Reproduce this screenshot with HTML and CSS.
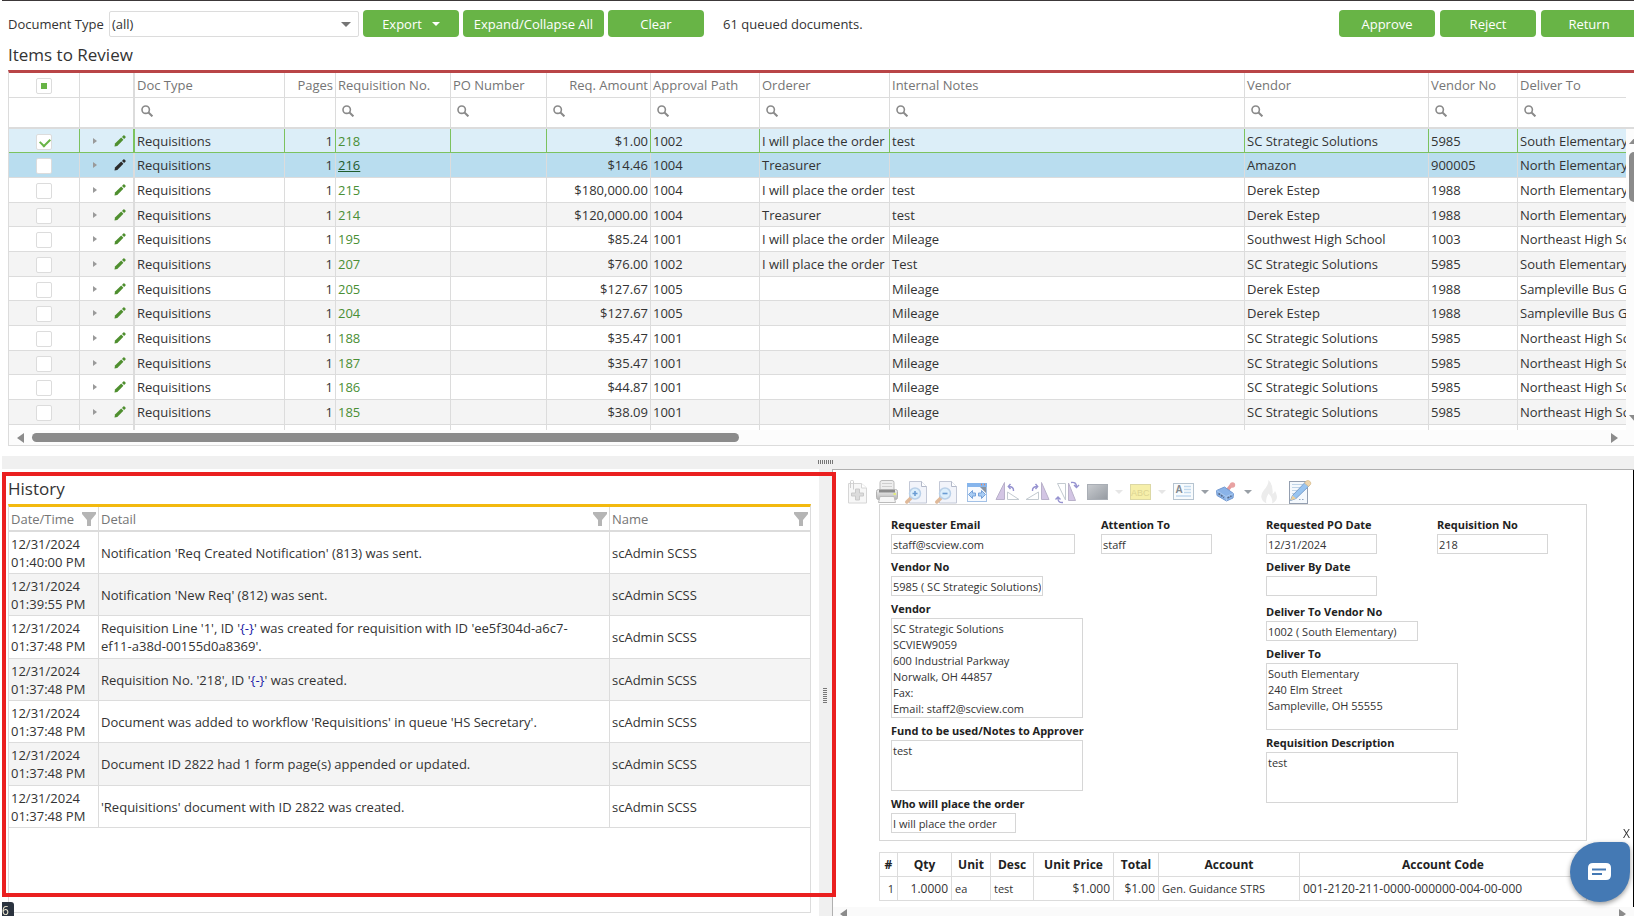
FILE: index.html
```html
<!DOCTYPE html>
<html lang="en">

<head>
    <meta charset="UTF-8">
    <meta name="viewport" content="width=device-width, initial-scale=1.0">
    <title>Items to Review</title>
    <link rel="stylesheet" href="styles.css">
</head>

<body>
    <!-- shared icons -->
    <svg class="symbols" aria-hidden="true">
        <symbol id="icon-search" viewBox="0 0 12 12">
            <circle cx="4.7" cy="4.7" r="3.7" fill="none" stroke="#8a8a8a" stroke-width="1.6"/>
            <path d="M7.5 7.5L11.4 11.4" stroke="#8a8a8a" stroke-width="2"/>
        </symbol>
        <symbol id="icon-pencil" viewBox="0 0 12 12">
            <path d="M0.5 11.5L1 8.6L7.2 2.6L9.4 4.8L3.3 10.9Z" fill="currentColor"/>
            <path d="M8 1.9L9.3 0.6Q10 0 10.8 0.8L11.3 1.3Q12 2 11.4 2.7L10.1 4Z" fill="currentColor"/>
        </symbol>
        <symbol id="icon-filter" viewBox="0 0 14 14">
            <path d="M0 0H14V2L9 8V14H5V8L0 2Z" fill="#b5b5b5"/>
        </symbol>
    </svg>

    <section class="review">
        <div class="toolbar">
            <label for="docType">Document Type</label>
            <div class="select-box">
                <select id="docType">
                    <option>(all)</option>
                </select>
            </div>
            <button class="button">Export <span class="caret"></span></button>
            <button class="button button-wide">Expand/Collapse All</button>
            <button class="button">Clear</button>
            <span class="queued">61 queued documents.</span>
            <div class="actions">
                <button class="button">Approve</button>
                <button class="button">Reject</button>
                <button class="button">Return</button>
            </div>
        </div>

        <h1 class="title">Items to Review</h1>

        <div class="grid">
            <div class="grid-main">
                <div class="grid-view">
                    <table class="items">
                        <colgroup>
                            <col class="c-check"><col class="c-edit"><col class="c-type"><col class="c-pages">
                            <col class="c-req"><col class="c-po"><col class="c-amount"><col class="c-path">
                            <col class="c-orderer"><col class="c-notes"><col class="c-vendor"><col class="c-vno">
                            <col class="c-deliver">
                        </colgroup>
                        <thead>
                            <tr class="names">
                                <th class="center"><input type="checkbox" class="check" id="checkAll" aria-label="Select all"></th>
                                <th></th>
                                <th>Doc Type</th>
                                <th class="right">Pages</th>
                                <th>Requisition No.</th>
                                <th>PO Number</th>
                                <th class="right">Req. Amount</th>
                                <th>Approval Path</th>
                                <th>Orderer</th>
                                <th>Internal Notes</th>
                                <th>Vendor</th>
                                <th>Vendor No</th>
                                <th>Deliver To</th>
                            </tr>
                            <tr class="filters" id="filters"></tr>
                        </thead>
                        <tbody id="rows"></tbody>
                    </table>
                </div>
                <div class="vscroll">
                    <div class="vscroll-head"></div>
                    <div class="vscroll-track">
                        <span class="arrow arrow-up"></span>
                        <span class="vthumb"></span>
                        <span class="arrow arrow-down"></span>
                    </div>
                </div>
            </div>
            <div class="hscroll">
                <span class="arrow arrow-left"></span>
                <div class="hscroll-track"><span class="hthumb"></span></div>
                <span class="arrow arrow-right"></span>
            </div>
        </div>
    </section>

    <div class="splitter"><span class="grip"></span></div>

    <div class="lower">
        <section class="history">
            <h2 class="title">History</h2>
            <div class="history-grid">
                <table class="log">
                    <colgroup>
                        <col class="c-date"><col class="c-detail"><col class="c-name">
                    </colgroup>
                    <thead>
                        <tr>
                            <th><div class="th-filter">Date/Time <svg class="funnel"><use href="#icon-filter"/></svg></div></th>
                            <th><div class="th-filter">Detail <svg class="funnel"><use href="#icon-filter"/></svg></div></th>
                            <th><div class="th-filter">Name <svg class="funnel"><use href="#icon-filter"/></svg></div></th>
                        </tr>
                    </thead>
                    <tbody>
                        <tr>
                            <td>12/31/2024<br>01:40:00 PM</td>
                            <td>Notification 'Req Created Notification' (813) was sent.</td>
                            <td>scAdmin SCSS</td>
                        </tr>
                        <tr>
                            <td>12/31/2024<br>01:39:55 PM</td>
                            <td>Notification 'New Req' (812) was sent.</td>
                            <td>scAdmin SCSS</td>
                        </tr>
                        <tr>
                            <td>12/31/2024<br>01:37:48 PM</td>
                            <td>Requisition Line '1', ID '<a href="#">{-}</a>' was created for requisition with ID 'ee5f304d-a6c7-<br>ef11-a38d-00155d0a8369'.</td>
                            <td>scAdmin SCSS</td>
                        </tr>
                        <tr>
                            <td>12/31/2024<br>01:37:48 PM</td>
                            <td>Requisition No. '218', ID '<a href="#">{-}</a>' was created.</td>
                            <td>scAdmin SCSS</td>
                        </tr>
                        <tr>
                            <td>12/31/2024<br>01:37:48 PM</td>
                            <td>Document was added to workflow 'Requisitions' in queue 'HS Secretary'.</td>
                            <td>scAdmin SCSS</td>
                        </tr>
                        <tr>
                            <td>12/31/2024<br>01:37:48 PM</td>
                            <td>Document ID 2822 had 1 form page(s) appended or updated.</td>
                            <td>scAdmin SCSS</td>
                        </tr>
                        <tr>
                            <td>12/31/2024<br>01:37:48 PM</td>
                            <td>'Requisitions' document with ID 2822 was created.</td>
                            <td>scAdmin SCSS</td>
                        </tr>
                    </tbody>
                </table>
            </div>
        </section>

        <div class="splitter splitter-v"><span class="grip grip-v"></span></div>

        <section class="viewer">
            <div class="viewer-tools">
                <button class="tool" aria-label="Add page">
                    <svg viewBox="0 0 24 24"><path d="M2.5 3.5H15.5L20.5 8V23H2.5Z" fill="#f7f7f7" stroke="#d6d6d6"/><path d="M15.5 3.5V8H20.5" fill="#fff" stroke="#d6d6d6"/><path d="M9.5 9V13H5.5V16H9.5V20H13.5V16H17.5V13H13.5V9Z" fill="#dcdcdc" stroke="#cacaca"/><path d="M4.5 8V1.5Q4.5 0.5 5.5 0.5H6.5Q7.5 0.5 7.5 1.5V9.5" fill="none" stroke="#cfcfcf"/></svg>
                </button>
                <button class="tool" aria-label="Print">
                    <svg viewBox="0 0 24 24"><defs><linearGradient id="pr" x1="0" y1="0" x2="0" y2="1"><stop offset="0" stop-color="#f2f2f2"/><stop offset="1" stop-color="#b4b4b4"/></linearGradient></defs><rect x="4" y="0.5" width="14" height="11" rx="2" fill="#eee" stroke="#bbb"/><path d="M6 3.5H16M6 6.5H16" stroke="#cfcfcf"/><rect x="0.5" y="9.5" width="21" height="10" rx="2" fill="url(#pr)" stroke="#b3b3b3"/><rect x="3" y="10" width="16" height="2.5" fill="#8b8b8b"/><rect x="17.5" y="13" width="2.5" height="2" fill="#e3ec7e"/><path d="M4 16.5H18L19.5 22.5H2.5Z" fill="#f6f6f6" stroke="#bbb"/></svg>
                </button>
                <button class="tool" aria-label="Zoom in">
                    <svg viewBox="0 0 24 24"><path d="M3.5 1.5H15.5L20.5 6.5V23H3.5Z" fill="#f2f4fa" stroke="#c3c8d6"/><path d="M15.5 1.5V6.5H20.5" fill="#fff" stroke="#b3b9c9"/><path d="M5.5 17.5L0.8 22" stroke="#dfb999" stroke-width="3.5" stroke-linecap="round"/><circle cx="9" cy="13.5" r="5.5" fill="#dceefb" stroke="#b9d0e8" stroke-width="1.5"/><path d="M6.5 13.5H11.5M9 11V16" stroke="#6a9cd3" stroke-width="1.6"/></svg>
                </button>
                <button class="tool" aria-label="Zoom out">
                    <svg viewBox="0 0 24 24"><path d="M3.5 1.5H15.5L20.5 6.5V23H3.5Z" fill="#f2f4fa" stroke="#c3c8d6"/><path d="M15.5 1.5V6.5H20.5" fill="#fff" stroke="#b3b9c9"/><path d="M5.5 17.5L0.8 22" stroke="#dfb999" stroke-width="3.5" stroke-linecap="round"/><circle cx="9" cy="13.5" r="5.5" fill="#dceefb" stroke="#b9d0e8" stroke-width="1.5"/><path d="M6.5 13.5H11.5" stroke="#6a9cd3" stroke-width="1.6"/></svg>
                </button>
                <button class="tool" aria-label="Fit width">
                    <svg viewBox="0 0 24 24"><rect x="1.5" y="3.5" width="19" height="18" fill="#f7fafe" stroke="#a3c1e6"/><rect x="1" y="3" width="20" height="4" fill="#86b5ec"/><path d="M15 4.5H16M18 4.5H19" stroke="#e8865e" stroke-width="1.5"/><path d="M14 7H20V13Z" fill="#8a93a0"/><path d="M2.5 14.5L6.5 10.5V13H9.500V16H6.500V18.500ZM19.500 14.500L15.500 10.500V13H12.500V16H15.500V18.500Z" fill="#a9cdf4" stroke="#76a2d9"/></svg>
                </button>
                <button class="tool" aria-label="Rotate left">
                    <svg viewBox="0 0 24 24"><path d="M8.5 2.5V19.5H0Z" fill="#d3c5e4" stroke="#b9b1ca"/><path d="M11.5 12V19.5H23Z" fill="#fff" stroke="#c3cad0"/><path d="M17.5 11Q18 6.500 12.5 6.500M14.500 4L12.300 6.500L14.500 9" fill="none" stroke="#9692d0" stroke-width="1.4"/></svg>
                </button>
                <button class="tool" aria-label="Rotate right">
                    <svg viewBox="0 0 24 24"><path d="M15.5 2.5V19.5H23Z" fill="#d3c5e4" stroke="#b9b1ca"/><path d="M12.5 12V19.5H0Z" fill="#fff" stroke="#c3cad0"/><path d="M6.500 11Q6 6.500 11.5 6.500M9.500 4L11.700 6.500L9.500 9" fill="none" stroke="#9692d0" stroke-width="1.4"/></svg>
                </button>
                <button class="tool" aria-label="Flip">
                    <svg viewBox="0 0 24 24"><path d="M1.5 3.5H9.500V20Z" fill="#fff" stroke="#c3cad0"/><path d="M12.5 3V20.5H19.5Z" fill="#d3c5e4" stroke="#b9b1ca"/><path d="M15 2.5Q20.5 1.5 20.5 7M18 5L20.5 7.5L23 5M7 22.5Q1.5 23 2 17.5M-0.5 19.5L2 17L4.5 19.5" fill="none" stroke="#9692d0" stroke-width="1.4"/></svg>
                </button>
                <div class="tool-group">
                    <button class="tool" aria-label="Redact">
                        <svg viewBox="0 0 24 24"><defs><linearGradient id="gr" x1="0" y1="0" x2="1" y2="1"><stop offset="0" stop-color="#c9ccd0"/><stop offset="1" stop-color="#959aa1"/></linearGradient></defs><rect x="1.5" y="4.5" width="20" height="15" fill="url(#gr)" stroke="#a9aeb5"/></svg>
                    </button>
                    <button class="tool-drop faint" aria-label="Redact options"></button>
                </div>
                <div class="tool-group">
                    <button class="tool" aria-label="Highlight">
                        <svg viewBox="0 0 24 24"><rect x="1.5" y="4.5" width="20" height="15" fill="#f6efaa" stroke="#dcd8a5"/><text x="2" y="15.5" class="tool-text" fill="#dcd493">ABC</text></svg>
                    </button>
                    <button class="tool-drop faint" aria-label="Highlight options"></button>
                </div>
                <div class="tool-group">
                    <button class="tool" aria-label="Text note">
                        <svg viewBox="0 0 24 24"><rect x="1.5" y="3.5" width="20" height="16" fill="#f8fbfd" stroke="#b6c4d0"/><text x="3.5" y="13" class="tool-letter" fill="#828990">A</text><path d="M12 6.5H19M12 9.5H19M12 12.5H19M4 16H19" stroke="#c1d9ee" stroke-width="1.3"/></svg>
                    </button>
                    <button class="tool-drop" aria-label="Text note options"></button>
                </div>
                <div class="tool-group">
                    <button class="tool" aria-label="Stamp">
                        <svg viewBox="0 0 24 24"><path d="M12.5 10L16.5 5" stroke="#e59a9a" stroke-width="3.5"/><circle cx="17.5" cy="5" r="2.7" fill="#e8a2a2"/><path d="M1.5 10.5L9.5 7L18.5 13.5L18 18L11.5 21L2 15.5Z" fill="#8ab3e8" stroke="#7399d0"/><path d="M1.5 10.5L11 16.5L18.5 13.5M11 16.5L11.5 21" fill="none" stroke="#abcaf0"/><path d="M3.5 13.5L9 17.5M12.5 18L16.5 16" stroke="#596b88" stroke-width="1.6" stroke-dasharray="2 1"/></svg>
                    </button>
                    <button class="tool-drop" aria-label="Stamp options"></button>
                </div>
                <button class="tool" aria-label="Burn">
                    <svg viewBox="0 0 24 24"><path d="M10.5 0Q10.5 5 6 10Q3 13.5 3.300 17Q4 21.5 8.5 23.5Q7 19 10.5 13.5Q15.5 18.5 14 23.5Q19 21 19 16.5Q18.5 13 17 11Q16.5 13 14.5 14Q15.5 5 10.5 0Z" fill="#ececec"/></svg>
                </button>
                <button class="tool" aria-label="Edit form">
                    <svg viewBox="0 0 24 24"><rect x="1.5" y="1.5" width="18" height="22" fill="#f5f9fd" stroke="#949fb0"/><path d="M4 4.5H15M4 7.5H13M4 10.5H11M4 13.5H9" stroke="#bfd4e8" stroke-width="1.2"/><path d="M11 19.5H12.5M14 19.5H15.5" stroke="#8fa5c2"/><path d="M2.5 20.5L4.5 15.5L17.5 2L21.5 5.5L8 18.5Z" fill="#98c4f0" stroke="#7a9fcc"/><path d="M2.5 20.5L4.5 15.5L8 18.5Z" fill="#ecd09b"/><path d="M16.5 3L18.5 0.8Q20.5 0 22 1.5Q23.5 3 22.5 4.5L20.5 6.5Z" fill="#eed6ae" stroke="#d6b98a" stroke-width="0.7"/></svg>
                </button>
            </div>

            <div class="page">
                <form class="form">
                    <div class="form-left">
                        <div class="pair">
                            <div class="field">
                                <label for="email">Requester Email</label>
                                <input type="text" id="email" class="w-email" value="staff@scview.com">
                            </div>
                            <div class="field">
                                <label for="attention">Attention To</label>
                                <input type="text" id="attention" value="staff">
                            </div>
                        </div>
                        <div class="field">
                            <label for="vendorNo">Vendor No</label>
                            <input type="text" id="vendorNo" class="w-code" value="5985 ( SC Strategic Solutions)">
                        </div>
                        <div class="field">
                            <label for="vendor">Vendor</label>
                            <textarea id="vendor" class="h-tall">SC Strategic Solutions
SCVIEW9059
600 Industrial Parkway
Norwalk, OH 44857
Fax:
Email: staff2@scview.com</textarea>
                        </div>
                        <div class="field">
                            <label for="fund">Fund to be used/Notes to Approver</label>
                            <textarea id="fund">test</textarea>
                        </div>
                        <div class="field">
                            <label for="placer">Who will place the order</label>
                            <input type="text" id="placer" class="w-placer" value="I will place the order">
                        </div>
                    </div>
                    <div class="form-right">
                        <div class="pair">
                            <div class="field">
                                <label for="poDate">Requested PO Date</label>
                                <input type="text" id="poDate" value="12/31/2024">
                            </div>
                            <div class="field">
                                <label for="reqNo">Requisition No</label>
                                <input type="text" id="reqNo" value="218">
                            </div>
                        </div>
                        <div class="field">
                            <label for="byDate">Deliver By Date</label>
                            <input type="text" id="byDate" value="">
                        </div>
                        <div class="field deliver">
                            <label for="deliverNo">Deliver To Vendor No</label>
                            <input type="text" id="deliverNo" class="w-code" value="1002 ( South Elementary)">
                        </div>
                        <div class="field">
                            <label for="deliverTo">Deliver To</label>
                            <textarea id="deliverTo" class="h-mid">South Elementary
240 Elm Street
Sampleville, OH 55555</textarea>
                        </div>
                        <div class="field">
                            <label for="reqDesc">Requisition Description</label>
                            <textarea id="reqDesc">test</textarea>
                        </div>
                    </div>
                </form>

                <table class="lines">
                    <colgroup>
                        <col class="l-num"><col class="l-qty"><col class="l-unit"><col class="l-desc">
                        <col class="l-price"><col class="l-total"><col class="l-account"><col>
                    </colgroup>
                    <thead>
                        <tr>
                            <th>#</th>
                            <th>Qty</th>
                            <th>Unit</th>
                            <th>Desc</th>
                            <th>Unit Price</th>
                            <th>Total</th>
                            <th>Account</th>
                            <th>Account Code</th>
                        </tr>
                    </thead>
                    <tbody>
                        <tr>
                            <td class="right">1</td>
                            <td class="right num">1.0000</td>
                            <td>ea</td>
                            <td>test</td>
                            <td class="right num">$1.000</td>
                            <td class="right num">$1.00</td>
                            <td>Gen. Guidance STRS</td>
                            <td class="num">001-2120-211-0000-000000-004-00-000</td>
                        </tr>
                    </tbody>
                </table>
            </div>

            <div class="viewer-scroll">
                <span class="arrow arrow-left"></span>
                <span class="arrow arrow-right"></span>
            </div>
        </section>

        <div class="outline"></div>
    </div>

    <span class="corner-badge">6</span>
    <button class="chat-close" aria-label="Close chat">X</button>
    <button class="chat" aria-label="Open chat">
        <svg viewBox="0 0 24 18"><path d="M5 0H18Q23 0 23 5V12Q23 17 18 17H1Q0 17 0 16V5Q0 0 5 0Z" fill="#fff"/><path d="M4 6.5H18M4 11H14" stroke="#4479b4" stroke-width="2"/></svg>
    </button>

    <script>
        // req no, amount, path, orderer, notes, vendor, vendor no, deliver to
        var items = [
            [218, '$1.00', '1002', 'I will place the order', 'test', 'SC Strategic Solutions', '5985', 'South Elementary'],
            [216, '$14.46', '1004', 'Treasurer', '', 'Amazon', '900005', 'North Elementary'],
            [215, '$180,000.00', '1004', 'I will place the order', 'test', 'Derek Estep', '1988', 'North Elementary'],
            [214, '$120,000.00', '1004', 'Treasurer', 'test', 'Derek Estep', '1988', 'North Elementary'],
            [195, '$85.24', '1001', 'I will place the order', 'Mileage', 'Southwest High School', '1003', 'Northeast High School'],
            [207, '$76.00', '1002', 'I will place the order', 'Test', 'SC Strategic Solutions', '5985', 'South Elementary'],
            [205, '$127.67', '1005', '', 'Mileage', 'Derek Estep', '1988', 'Sampleville Bus Garage'],
            [204, '$127.67', '1005', '', 'Mileage', 'Derek Estep', '1988', 'Sampleville Bus Garage'],
            [188, '$35.47', '1001', '', 'Mileage', 'SC Strategic Solutions', '5985', 'Northeast High School'],
            [187, '$35.47', '1001', '', 'Mileage', 'SC Strategic Solutions', '5985', 'Northeast High School'],
            [186, '$44.87', '1001', '', 'Mileage', 'SC Strategic Solutions', '5985', 'Northeast High School'],
            [185, '$38.09', '1001', '', 'Mileage', 'SC Strategic Solutions', '5985', 'Northeast High School']
        ];

        var html = '';
        items.forEach(function (r, i) {
            var cls = i === 0 ? 'checked' : (i === 1 ? 'current' : '');
            html += `<tr class="${cls}">
                <td class="center"><input type="checkbox" class="check" aria-label="Select ${r[0]}" ${i === 0 ? 'checked' : ''}></td>
                <td><div class="row-tools"><span class="expander"></span><svg class="pencil"><use href="#icon-pencil"/></svg></div></td>
                <td>Requisitions</td>
                <td class="right">1</td>
                <td><a href="#">${r[0]}</a></td>
                <td></td>
                <td class="right">${r[1]}</td>
                <td>${r[2]}</td><td>${r[3]}</td><td>${r[4]}</td><td>${r[5]}</td><td>${r[6]}</td><td>${r[7]}</td>
            </tr>`;
        });
        html += '<tr>' + '<td></td>'.repeat(13) + '</tr>';
        document.getElementById('rows').innerHTML = html;

        // check, edit and pages columns have no filter
        var filters = '';
        for (var c = 0; c < 13; c++) {
            filters += (c === 0 || c === 1 || c === 3) ? '<td></td>' :
                '<td><div class="filter"><svg class="search"><use href="#icon-search"/></svg><input type="text" aria-label="Filter"></div></td>';
        }
        document.getElementById('filters').innerHTML = filters;
        document.getElementById('checkAll').indeterminate = true;
    </script>
</body>

</html>
```

FILE: styles.css
```css
* {
    box-sizing: border-box;
}

body {
    display: flex;
    flex-direction: column;
    height: 100vh;
    margin: 0;
    padding-left: 2px;
    overflow: hidden;
    background: #fff;
    color: #333;
    font-family: "Open Sans", "Noto Sans", sans-serif;
    font-size: 13px;
    line-height: 18px;
}

button,
input,
select,
textarea {
    font-family: inherit;
    font-size: inherit;
    color: inherit;
}

table {
    width: 100%;
    table-layout: fixed;
    border-collapse: separate;
    border-spacing: 0;
}

.symbols {
    display: none;
}

.right {
    text-align: right;
}

.center {
    text-align: center;
}

/* top section, runs a little past the right edge */
.review {
    margin-right: -18px;
    border-top: 1px solid #3c3839;
    padding: 9px 8px 0 6px;
}

.toolbar {
    display: flex;
    align-items: center;
    gap: 4px;
    padding-right: 7px;
}

.toolbar label {
    min-width: 97px;
}

.select-box {
    position: relative;
    width: 250px;
}

.select-box::after {
    content: "";
    position: absolute;
    right: 8px;
    top: 11px;
    border: 5px solid transparent;
    border-top-color: #757575;
    pointer-events: none;
}

.select-box select {
    display: block;
    appearance: none;
    width: 100%;
    height: 26px;
    padding: 0 2px;
    border: 1px solid #dcdcdc;
    border-radius: 2px;
    background: #fff;
}

.button {
    display: flex;
    align-items: center;
    justify-content: center;
    gap: 10px;
    width: 96px;
    height: 27px;
    padding: 0;
    border: none;
    border-radius: 4px;
    background: #68b446;
    color: #fff;
    cursor: pointer;
}

.button-wide {
    width: 141px;
}

.caret {
    border: 4px solid transparent;
    border-top-color: #fff;
    border-bottom: none;
}

.queued {
    margin-left: 15px;
}

.actions {
    display: flex;
    gap: 5px;
    margin-left: auto;
}

.title {
    margin: 0;
    padding: 6px 0 3px;
    font-size: 17px;
    font-weight: 400;
    line-height: 24px;
}

/* items grid */
.grid {
    border: 1px solid #dcdcdc;
    border-top: 3px solid #b94547;
}

.grid-main {
    display: flex;
}

.grid-view {
    flex: 1;
    height: 357px;
    overflow: hidden;
}

.c-check { width: 71px; }
.c-edit { width: 55px; }
.c-type { width: 150px; }
.c-pages { width: 51px; }
.c-req { width: 115px; }
.c-po { width: 96px; }
.c-amount { width: 104px; }
.c-path { width: 109px; }
.c-orderer { width: 130px; }
.c-vendor { width: 184px; }
.c-vno { width: 89px; }
.c-deliver { width: 108px; }

.items th,
.items td {
    height: 25px;
    padding: 0 2px;
    border-right: 1px solid #dcdcdc;
    border-bottom: 1px solid #dcdcdc;
    white-space: nowrap;
    overflow: hidden;
}

.items th:last-child,
.items td:last-child {
    border-right: none;
}

.items th:nth-child(2),
.items td:nth-child(2) {
    border-right-width: 2px;
}

.items th {
    color: #757575;
    font-weight: 400;
    text-align: left;
}

.items th.right {
    text-align: right;
}

.items th.center {
    text-align: center;
}

.items .filters td {
    height: 31px;
    padding-bottom: 3px;
    border-bottom-width: 2px;
}

.items tbody tr:nth-child(3n+1) td {
    height: 24px;
}

.items tbody tr:nth-child(even) {
    background: #f4f4f4;
}

.items tbody tr.checked {
    background: #dceef8;
}

.items tbody tr.checked td {
    border-color: #7cc25f;
}

.items tbody tr.current {
    background: #b9ddef;
}

.items a {
    color: #4a8f35;
    text-decoration: none;
}

.items .current a {
    color: #1f5c2c;
    text-decoration: underline;
}

.filter {
    display: flex;
    align-items: center;
    padding-left: 4px;
}

.filter input {
    width: 50%;
    height: 20px;
    border: none;
    background: none;
}

.search {
    flex: none;
    width: 12px;
    height: 12px;
}

.check {
    appearance: none;
    display: block;
    width: 16px;
    height: 16px;
    margin: 2px auto 0;
    border: 1px solid #dcdcdc;
    border-radius: 2px;
    background: #fff;
}

.check:indeterminate {
    padding: 4px;
    background: #68b446 content-box;
}

.check:checked::after {
    content: "";
    display: block;
    width: 8px;
    height: 5px;
    margin: 3px 3px;
    border-left: 2px solid #68b446;
    border-bottom: 2px solid #68b446;
    transform: rotate(-45deg);
}

.row-tools {
    display: flex;
    align-items: center;
    gap: 17px;
    padding-left: 11px;
}

.expander {
    border: 3px solid transparent;
    border-left: 4px solid #9a9a9a;
    border-right: none;
}

.pencil {
    width: 12px;
    height: 12px;
    color: #4f8f2f;
}

.current .pencil {
    color: #2b2b2b;
}

/* scrollbars */
.vscroll {
    display: flex;
    flex-direction: column;
    width: 17px;
}

.vscroll-head {
    height: 56px;
    border-bottom: 2px solid #dcdcdc;
}

.vscroll-track {
    flex: 1;
    display: flex;
    flex-direction: column;
    align-items: center;
    padding: 8px 0;
    background: #fcfcfc;
}

.vthumb {
    width: 11px;
    height: 50px;
    margin-top: 8px;
    border-radius: 5px;
    background: #8b8b8b;
}

.hscroll {
    display: flex;
    align-items: center;
    height: 15px;
    padding: 0 25px 0 8px;
    background: #fcfcfc;
}

.hscroll-track {
    flex: 1;
    margin: 0 8px;
}

.hthumb {
    display: block;
    width: 45%;
    height: 9px;
    border-radius: 5px;
    background: #8b8b8b;
}

.arrow {
    border: 5px solid transparent;
}

.arrow-left {
    border-left: none;
    border-right: 7px solid #8b8b8b;
}

.arrow-right {
    border-right: none;
    border-left: 7px solid #8b8b8b;
}

.arrow-up {
    border-width: 6px;
    border-top: none;
    border-bottom: 7px solid #8b8b8b;
}

.arrow-down {
    margin-top: auto;
    border-width: 6px;
    border-bottom: none;
    border-top: 7px solid #8b8b8b;
}

/* splitters */
.splitter {
    display: flex;
    flex: none;
    align-items: center;
    justify-content: center;
    height: 13px;
    margin-top: 10px;
    background: #f0f0f0;
}

.splitter-v {
    height: auto;
    margin-top: 0;
}

.grip {
    width: 15px;
    height: 4px;
    margin: 0 0 2px 14px;
    background: repeating-linear-gradient(90deg, #777 0 1px, transparent 1px 2px);
}

.grip-v {
    width: 4px;
    height: 15px;
    margin: 6px 0 0 -2px;
    background: repeating-linear-gradient(#777 0 1px, transparent 1px 2px);
}

/* lower half */
.lower {
    position: relative;
    flex: 1;
    min-height: 0;
    display: grid;
    grid-template-columns: calc(50% + 1px) 13px minmax(0, 1fr);
}

.outline {
    position: absolute;
    left: 0;
    top: 3px;
    width: calc(50% + 18px);
    bottom: 19px;
    border: 4px solid #ea1f1f;
    pointer-events: none;
}

.history {
    display: flex;
    flex-direction: column;
    padding: 2px 8px 3px 6px;
}

.history-grid {
    flex: 1;
    border: 1px solid #dcdcdc;
    border-top: 3px solid #f3b90f;
}

.c-date { width: 90px; }
.c-name { width: 200px; }

.log th,
.log td {
    height: 42px;
    padding: 0 2px;
    border-right: 1px solid #dcdcdc;
    border-bottom: 1px solid #dcdcdc;
    text-align: left;
}

.log th:last-child,
.log td:last-child {
    border-right: none;
}

.log th {
    height: 25px;
    border-bottom-width: 2px;
    color: #757575;
    font-weight: 400;
}

.log tbody tr:nth-child(3n) td {
    height: 43px;
}

.log tbody tr:nth-child(even) {
    background: #f4f4f4;
}

.log a {
    color: #1a1aa6;
    text-decoration: none;
}

.th-filter {
    display: flex;
    align-items: center;
    justify-content: space-between;
    white-space: nowrap;
}

.funnel {
    flex: none;
    width: 14px;
    height: 14px;
}

/* document viewer */
.viewer {
    display: flex;
    flex-direction: column;
    border-top: 1px solid #b0b0b0;
    border-left: 1px solid #b0b0b0;
    font-size: 11px;
    line-height: 16px;
}

.viewer-tools {
    display: flex;
    gap: 6px;
    padding: 10px 13px 0;
    border-right: 1px solid #000;
}

.tool {
    width: 24px;
    height: 24px;
    padding: 0;
    border: none;
    background: none;
}

.tool svg {
    display: block;
    overflow: visible;
}

.tool-text {
    font-family: "Liberation Sans", sans-serif;
    font-size: 9px;
}

.tool-letter {
    font-family: "Liberation Sans", sans-serif;
    font-size: 10px;
    font-weight: 700;
}

.tool-group {
    display: flex;
    align-items: center;
    gap: 5px;
}

.tool-drop {
    width: 8px;
    height: 4px;
    padding: 0;
    border: 4px solid transparent;
    border-top-color: #999fa6;
    border-bottom: none;
    background: none;
}

.tool-drop.faint {
    border-top-color: #e6e6e6;
}

.page {
    flex: 1;
    min-height: 0;
    padding: 0 46px;
    border-right: 1px solid #000;
    overflow: hidden;
}

.form {
    display: grid;
    grid-template-columns: 375fr 320fr;
    margin-bottom: 11px;
    padding: 12px 0 7px 11px;
    border: 1px solid #d6d6d6;
}

.pair {
    display: grid;
    grid-template-columns: 210fr 165fr;
}

.form-right .pair {
    grid-template-columns: 171fr 149fr;
}

.field {
    display: flex;
    flex-direction: column;
    align-items: flex-start;
    gap: 1px;
    margin-bottom: 5px;
}

.field:last-child {
    margin-bottom: 0;
}

.pair .field {
    margin-bottom: 5px;
}

.field.deliver {
    margin-top: 8px;
}

.field label {
    color: #222;
    font-weight: 700;
}

.field input,
.field textarea {
    display: block;
    width: 111px;
    height: 20px;
    padding: 0 1px;
    border: 1px solid #d6d6d6;
    background: #fff;
}

.field textarea {
    width: 192px;
    height: 51px;
    padding: 2px 1px;
    line-height: 16px;
    resize: none;
    overflow: hidden;
}

.field .w-email { width: 184px; }
.field .w-code { width: 152px; }
.field .w-placer { width: 125px; }
.field .h-tall { height: 100px; }
.field .h-mid { height: 67px; }

.lines {
    border-top: 1px solid #dcdcdc;
    border-left: 1px solid #dcdcdc;
}

.l-num { width: 18px; }
.l-qty { width: 54px; }
.l-unit { width: 39px; }
.l-desc { width: 43px; }
.l-price { width: 80px; }
.l-total { width: 45px; }
.l-account { width: 141px; }

.lines th,
.lines td {
    height: 24px;
    padding: 0 3px;
    border-right: 1px solid #dcdcdc;
    border-bottom: 1px solid #dcdcdc;
    white-space: nowrap;
}

.lines th {
    padding: 0;
    color: #222;
    font-size: 12px;
}

.lines .num {
    font-size: 12px;
}

.viewer-scroll {
    display: flex;
    justify-content: space-between;
    height: 9px;
    padding: 2px 8px 0 7px;
    background: #fafafa;
    overflow: hidden;
}

/* floating bits */
.corner-badge {
    position: fixed;
    left: 2px;
    bottom: 0;
    width: 12px;
    height: 14px;
    border-radius: 0 3px 0 0;
    background: #2b333f;
    color: #f5f0d8;
    font-size: 12px;
    overflow: hidden;
}

.chat-close {
    position: fixed;
    right: 4px;
    bottom: 74px;
    padding: 0;
    border: none;
    background: none;
    font-size: 12px;
    line-height: 16px;
}

.chat {
    position: fixed;
    right: 4px;
    bottom: 14px;
    display: flex;
    align-items: center;
    justify-content: center;
    width: 60px;
    height: 60px;
    padding: 0;
    border: none;
    border-radius: 30px 8px 30px 30px;
    background: #4479b4;
    box-shadow: 0 2px 5px rgba(0, 0, 0, 0.4);
}

.chat svg {
    width: 24px;
    height: 18px;
}
```
